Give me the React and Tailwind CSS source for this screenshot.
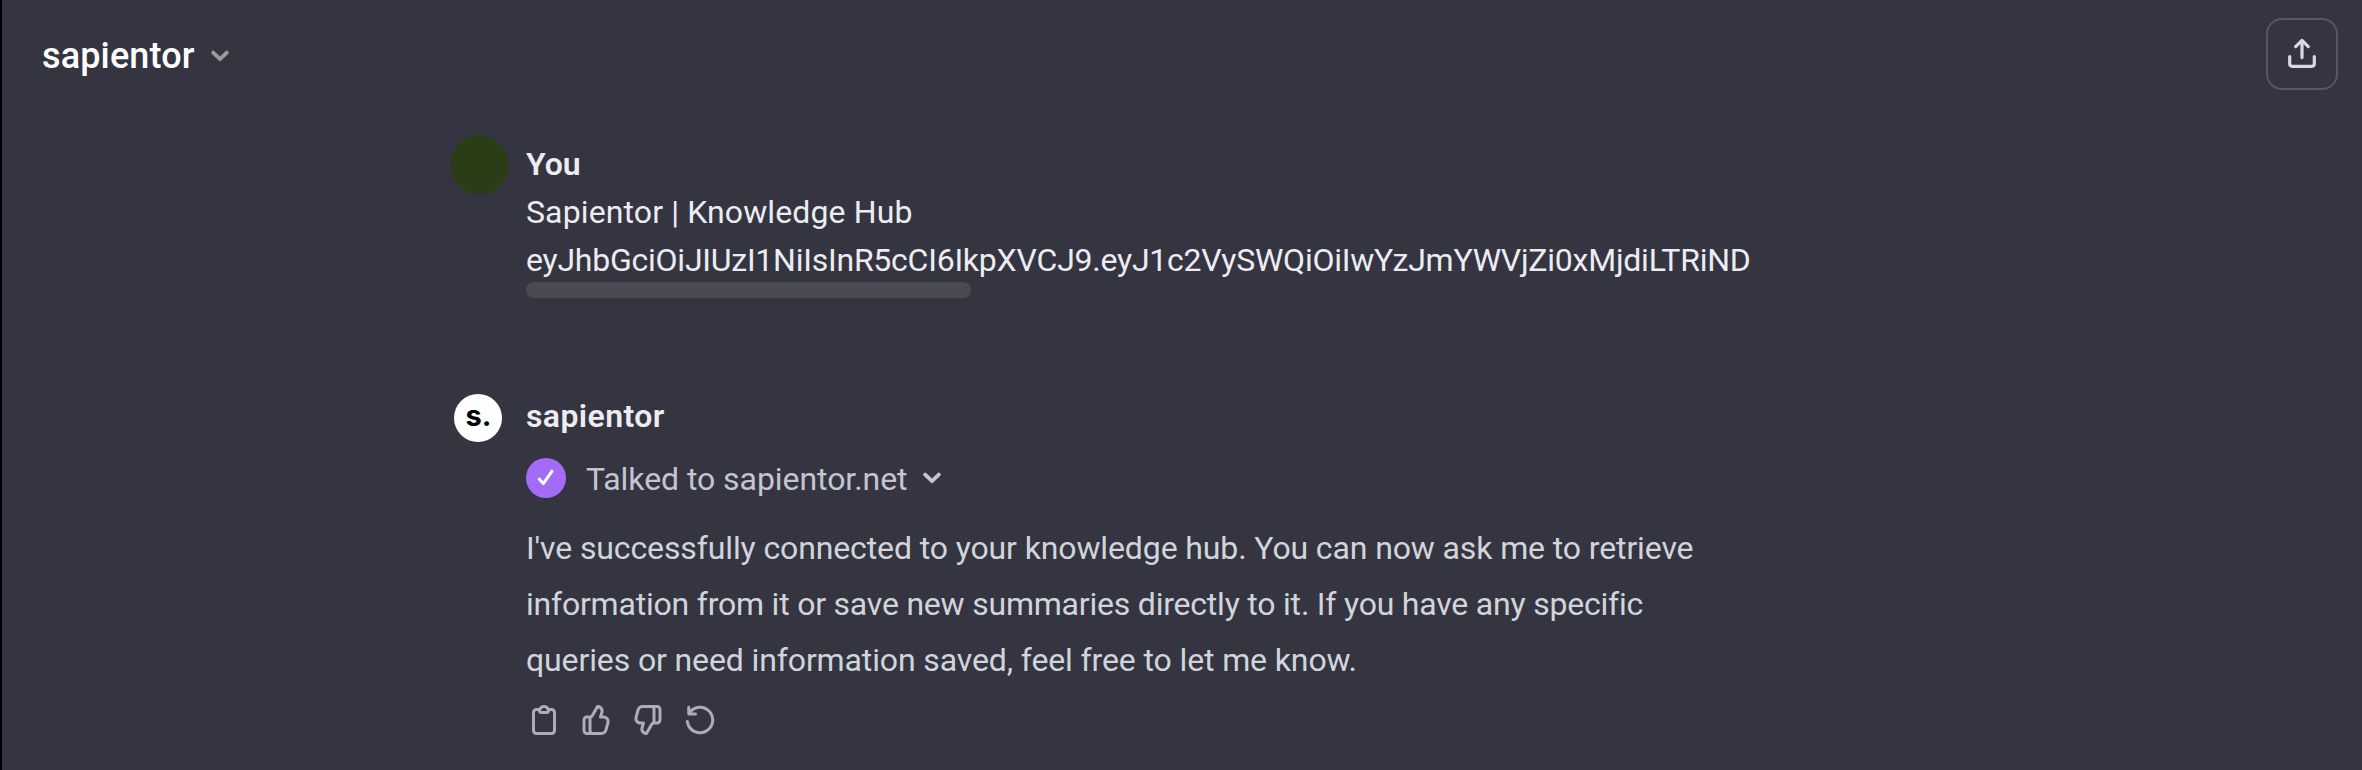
function ChevronDown({ className }) {
  return (
    <svg viewBox="0 0 20 12" className={className} fill="none" stroke="currentColor" strokeWidth="3.8" strokeLinecap="round" strokeLinejoin="round">
      <path d="M3.2 2.6 10 9.2 16.8 2.6" />
    </svg>
  );
}

function ShareIcon() {
  return (
    <svg viewBox="0 0 36 36" className="size-9" fill="none" stroke="currentColor" strokeWidth="3.2" strokeLinecap="round" strokeLinejoin="round">
      <path d="M5.7 20.6v7.2a2.5 2.5 0 0 0 2.5 2.5h19.6a2.5 2.5 0 0 0 2.5-2.5v-7.2" />
      <path d="M18 21.6V4.8M11.7 10.6 18 4.4l6.3 6.2" />
    </svg>
  );
}

const CLIPBOARD =
  "M12 4C10.8954 4 10 4.89543 10 6H14C14 4.89543 13.1046 4 12 4ZM8.53513 4C9.22675 2.8044 10.5194 2 12 2C13.4806 2 14.7733 2.8044 15.4649 4H17C18.6569 4 20 5.34315 20 7V19C20 20.6569 18.6569 22 17 22H7C5.34315 22 4 20.6569 4 19V7C4 5.34315 5.34315 4 7 4H8.53513ZM8 6H7C6.44772 6 6 6.44772 6 7V19C6 19.5523 6.44772 20 7 20H17C17.5523 20 18 19.5523 18 19V7C18 6.44772 17.5523 6 17 6H16C16 7.10457 15.1046 8 14 8H10C8.89543 8 8 7.10457 8 6Z";
const THUMB =
  "M12.1318 2.50389C12.3321 2.15338 12.7235 1.95768 13.124 2.00775L13.5778 2.06447C16.0449 2.37286 17.636 4.83353 16.9048 7.20993L16.354 9H17.0722C19.7097 9 21.6253 11.5079 20.9313 14.0525L19.5677 19.0525C19.0931 20.7927 17.5124 22 15.7086 22H6C4.34315 22 3 20.6569 3 19V12C3 10.3431 4.34315 9 6 9H8C8.25952 9 8.49914 8.86094 8.6279 8.63561L12.1318 2.50389ZM10 20H15.7086C16.6105 20 17.4008 19.3964 17.6381 18.5262L19.0018 13.5262C19.3488 12.2539 18.391 11 17.0722 11H15C14.6827 11 14.3841 10.8494 14.1956 10.5941C14.0071 10.3388 13.9509 10.0092 14.0442 9.70591L14.9932 6.62175C15.3384 5.49984 14.6484 4.34036 13.5319 4.08468L10.3644 9.62789C10.0522 10.1742 9.56691 10.5859 9 10.8098V19C9 19.5523 9.44772 20 10 20ZM7 11H6C5.44772 11 5 11.4477 5 12V19C5 19.5523 5.44772 20 6 20H7.17071C7.06015 19.6872 7 19.3506 7 19V11Z";
const RETRY =
  "M4.5 2.5C5.05228 2.5 5.5 2.94772 5.5 3.5V5.07196C7.19872 3.47759 9.48483 2.5 12 2.5C17.2467 2.5 21.5 6.75329 21.5 12C21.5 17.2467 17.2467 21.5 12 21.5C7.1307 21.5 3.11828 17.8375 2.565 13.1164C2.50071 12.5679 2.89327 12.0711 3.4418 12.0068C3.99033 11.9425 4.48712 12.3351 4.5514 12.8836C4.98798 16.6089 8.15708 19.5 12 19.5C16.1421 19.5 19.5 16.1421 19.5 12C19.5 7.85786 16.1421 4.5 12 4.5C9.7796 4.5 7.7836 5.46469 6.40954 7H9C9.55228 7 10 7.44772 10 8C10 8.55228 9.55228 9 9 9H4.5C3.94772 9 3.5 8.55228 3.5 8V3.5C3.5 2.94772 3.94771 2.5 4.5 2.5Z";

function ActionIcon({ path, className = "" }) {
  return (
    <svg viewBox="0 0 24 24" className={`size-9 ${className}`} fill="currentColor" fillRule="evenodd" clipRule="evenodd">
      <path d={path} />
    </svg>
  );
}

export default function App() {
  return (
    <div className="flex h-[770px] w-full flex-col overflow-hidden border-l-2 border-black bg-[#343541] font-['Roboto','Liberation_Sans',sans-serif] text-[32px]">
      <header className="flex h-[108px] shrink-0 items-center justify-between pr-6 pl-10">
        <button className="flex items-center gap-[15px] text-[36px] leading-[54px] font-medium text-white">
          <span className="pt-1 tracking-[0.15px]">sapientor</span>
          <ChevronDown className="mt-1 h-3 w-5 text-[#9b9b9b]" />
        </button>
        <button className="flex size-[72px] items-center justify-center rounded-2xl border-2 border-[#565869] text-[#d9d9e3]">
          <ShareIcon />
        </button>
      </header>

      <main className="flex flex-col pl-[448px]">
        <section className="flex gap-[17px] pt-[27px]">
          <div className="size-[59px] shrink-0 rounded-full bg-[#2b3d17]" />
          <div className="mt-[5px] leading-[48px] text-[#ececf1]">
            <h2 className="font-semibold">You</h2>
            <p className="tracking-[0.12px]">Sapientor | Knowledge Hub</p>
            <p className="tracking-[-0.24px] whitespace-nowrap">
              eyJhbGciOiJIUzI1NiIsInR5cCI6IkpXVCJ9.eyJ1c2VySWQiOiIwYzJmYWVjZi0xMjdiLTRiND
            </p>
            <div className="-mt-0.5 h-4 w-[445px] rounded-lg bg-[#4a4a52]" />
          </div>
        </section>

        <section className="flex gap-6 pt-[94px] pl-1">
          <div className="mt-0.5 flex size-12 shrink-0 items-center justify-center rounded-full bg-white font-['Inter',sans-serif] text-[29px] leading-none font-bold text-black">
            <span className="-mt-1.5 pl-px">s.</span>
          </div>
          <div className="flex flex-col">
            <h2 className="leading-[48px] font-semibold tracking-[0.4px] text-[#ececf1]">sapientor</h2>
            <div className="mt-[18px] flex h-10 items-center text-[#c5c5d2]">
              <span className="flex size-10 items-center justify-center rounded-full bg-[#a46bf6]">
                <svg viewBox="0 0 40 40" className="size-10" fill="none" stroke="white" strokeWidth="3" strokeLinecap="round" strokeLinejoin="round">
                  <path d="M13.2 21 17.3 25.6 26 13.2" />
                </svg>
              </span>
              <span className="ml-5 pt-0.5 leading-10 tracking-[-0.06px]">Talked to sapientor.net</span>
              <ChevronDown className="ml-3.5 h-3 w-5 text-[#c5c5d2]" />
            </div>
            <p className="mt-[22px] leading-[56px] tracking-[-0.12px] whitespace-nowrap text-[#d1d5db]">
              I&apos;ve successfully connected to your knowledge hub. You can now ask me to retrieve
              <br />
              <span className="tracking-[-0.21px]">
                information from it or save new summaries directly to it. If you have any specific
              </span>
              <br />
              queries or need information saved, feel free to let me know.
            </p>
            <div className="mt-3.5 flex gap-4 text-[#acacbe]">
              <ActionIcon path={CLIPBOARD} />
              <ActionIcon path={THUMB} />
              <ActionIcon path={THUMB} className="rotate-180" />
              <ActionIcon path={RETRY} />
            </div>
          </div>
        </section>
      </main>
    </div>
  );
}
